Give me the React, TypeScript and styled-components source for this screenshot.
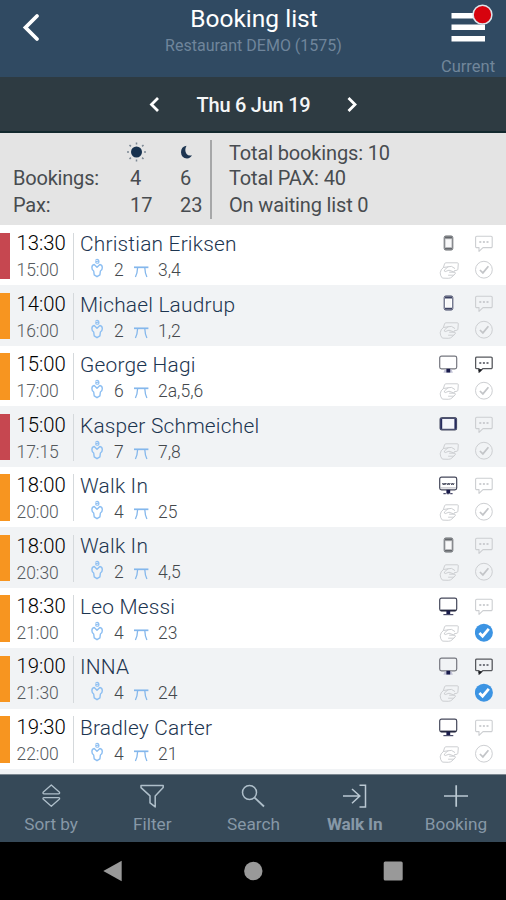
import React from "react";
import styled, { createGlobalStyle } from "styled-components";

const GlobalStyle = createGlobalStyle`
  * { box-sizing: border-box; }
  body { margin: 0; background: #000; font-family: Roboto, "Liberation Sans", sans-serif; }
`;

const Screen = styled.div`
  width: 506px;
  height: 900px;
  display: flex;
  flex-direction: column;
  overflow: hidden;
  background: #f5f8f9;
`;

const Header = styled.header`
  height: 77px;
  flex: none;
  display: grid;
  grid-template-columns: 76px 1fr 76px;
  background: #304a62;
`;

const BackButton = styled.div`
  padding: 13px 0 0 21px;
  svg { display: block; }
`;

const Titles = styled.div`
  text-align: center;
  white-space: nowrap;
`;

const Title = styled.h1`
  margin: 4px 0 0 2px;
  font-size: 24.5px;
  line-height: 29px;
  font-weight: 400;
  color: #fff;
  letter-spacing: 0;
`;

const Subtitle = styled.div`
  margin: 3px 0 0 1px;
  font-size: 16px;
  line-height: 19px;
  color: #6f859b;
  letter-spacing: 0;
`;

const MenuButton = styled.div`
  display: flex;
  flex-direction: column;
  align-items: center;
  svg { display: block; margin-top: 2px; }
`;

const MenuLabel = styled.span`
  margin-top: 7px;
  font-size: 16.5px;
  line-height: 20px;
  letter-spacing: 0;
  color: #71869a;
`;

const DateBar = styled.div`
  height: 56px;
  flex: none;
  display: flex;
  justify-content: center;
  align-items: center;
  gap: 34px;
  padding-top: 1px;
  background: #2e3b42;
  border-bottom: 2px solid #12292e;
  svg { display: block; }
`;

const DateText = styled.span`
  width: 116px;
  padding: 1px 0 0 1px;
  text-align: center;
  white-space: nowrap;
  font-size: 20px;
  font-weight: 500;
  letter-spacing: -0.25px;
  color: #f5f6f7;
`;

const Summary = styled.section`
  height: 92px;
  flex: none;
  display: flex;
  padding: 7px 0 0 13px;
  background: #e4e4e4;
  color: #484c50;
  font-size: 20px;
  line-height: 27px;
`;

const Counts = styled.div`
  width: 199px;
  height: 79px;
  display: grid;
  grid-template-columns: 117px 50px 1fr;
  grid-template-rows: 25px 27px 26px;
  border-right: 2px solid #a6a7a8;
  white-space: nowrap;
  svg { display: block; }
`;

const Label = styled.span`
  letter-spacing: -0.2px;
`;

const SunCell = styled.div`
  margin: 1px 0 0 -4px;
`;

const MoonCell = styled.div`
  margin: 5px 0 0 0;
`;

const Totals = styled.div`
  padding-left: 17px;
  display: grid;
  grid-template-rows: 25px 27px 26px;
  height: 79px;
  align-content: start;
  letter-spacing: -0.15px;
`;

const List = styled.main`
  flex: none;
  height: 550px;
  background: #f1f3f5;
  border-bottom: 1px solid #7c8790;
`;

const Row = styled.article<{ $alt: boolean }>`
  height: 60.45px;
  display: flex;
  align-items: flex-start;
  padding-top: 0.5px;
  background: ${(p) => (p.$alt ? "#f1f3f5" : "#ffffff")};
`;

const Status = styled.div<{ $color: string }>`
  width: 10px;
  height: 46.5px;
  margin-top: 7px;
  background: ${(p) => p.$color};
`;

const Times = styled.div`
  width: 64px;
  height: 47px;
  margin-top: 7px;
  padding-left: 6.5px;
  border-right: 1px solid #d5d9dc;
`;

const StartTime = styled.div`
  margin-top: -2.2px;
  font-size: 20.3px;
  font-weight: 300;
  line-height: 27px;
  color: #000;
`;

const EndTime = styled.div`
  font-size: 17.5px;
  font-weight: 300;
  line-height: 27px;
  color: #55595d;
  letter-spacing: -0.05px;
`;

const Details = styled.div`
  flex: 1;
  padding: 5.8px 0 0 6px;
  white-space: nowrap;
`;

const Guest = styled.div`
  font-size: 20.9px;
  font-weight: 300;
  line-height: 26px;
  letter-spacing: 0.2px;
  color: #1c3550;
`;

const Meta = styled.div`
  height: 26px;
  padding-left: 11px;
  display: grid;
  grid-template-columns: 23px 20px 24px auto;
  font-size: 17.5px;
  font-weight: 300;
  line-height: 27px;
  color: #44484c;
  svg { display: block; }
`;

const Actions = styled.div`
  width: 67px;
  display: grid;
  grid-template-columns: 35.5px 22px;
  grid-template-rows: 26px 26px;
  padding-top: 7.5px;
  svg { display: block; }
`;

const Toolbar = styled.nav`
  height: 67px;
  flex: none;
  display: grid;
  grid-template-columns: repeat(5, 1fr);
  background: #364958;
`;

const Tool = styled.div<{ $strong?: boolean }>`
  display: flex;
  flex-direction: column;
  align-items: center;
  padding: 7px 0 0 1px;
  font-size: 17.2px;
  line-height: 22px;
  font-weight: ${(p) => (p.$strong ? 700 : 400)};
  letter-spacing: ${(p) => (p.$strong ? "-0.15px" : "0")};
  color: #8798a7;
  svg { display: block; margin-bottom: 5px; }
`;

const SystemBar = styled.div`
  flex: 1;
  display: flex;
  justify-content: center;
  padding-top: 18px;
  gap: 120px;
  background: #000;
  svg { display: block; }
`;

type Device = "phone" | "desktop" | "desktopLight" | "tablet" | "web";

interface Booking {
  start: string;
  end: string;
  name: string;
  pax: number;
  tables: string;
  device: Device;
  soft?: boolean;
  note?: boolean;
  confirmed?: boolean;
  color: string;
}

const RED = "#c64750";
const ORANGE = "#f79520";

const bookings: Booking[] = [
  { start: "13:30", end: "15:00", name: "Christian Eriksen", pax: 2, tables: "3,4", device: "phone", soft: true, color: RED },
  { start: "14:00", end: "16:00", name: "Michael Laudrup", pax: 2, tables: "1,2", device: "phone", color: ORANGE },
  { start: "15:00", end: "17:00", name: "George Hagi", pax: 6, tables: "2a,5,6", device: "desktopLight", note: true, color: ORANGE },
  { start: "15:00", end: "17:15", name: "Kasper Schmeichel", pax: 7, tables: "7,8", device: "tablet", color: RED },
  { start: "18:00", end: "20:00", name: "Walk In", pax: 4, tables: "25", device: "web", color: ORANGE },
  { start: "18:00", end: "20:30", name: "Walk In", pax: 2, tables: "4,5", device: "phone", soft: true, color: ORANGE },
  { start: "18:30", end: "21:00", name: "Leo Messi", pax: 4, tables: "23", device: "desktop", confirmed: true, color: ORANGE },
  { start: "19:00", end: "21:30", name: "INNA", pax: 4, tables: "24", device: "desktopLight", note: true, confirmed: true, color: ORANGE },
  { start: "19:30", end: "22:00", name: "Bradley Carter", pax: 4, tables: "21", device: "desktop", color: ORANGE },
];

function DeviceIcon({ kind, soft }: { kind: Device; soft?: boolean }) {
  if (kind === "phone") {
    const c = soft ? "#65686d" : "#3d4262";
    return (
      <svg width="20" height="22" viewBox="0 0 20 22" fill="none">
        <rect x="5.2" y="3" width="8.6" height="14" rx="1.6" fill={soft ? "#d4d5d7" : "#fff"} stroke={c} strokeWidth="1" />
        <path d="M6 4.500h7M6 15.700h7" stroke={c} strokeWidth="1.800" />
        <rect x="7" y="6.400" width="5" height="7.600" fill="#f8f8f9" />
      </svg>
    );
  }
  if (kind === "tablet") {
    return (
      <svg width="20" height="22" viewBox="0 0 20 22" fill="none">
        <rect x="1" y="3.600" width="16.6" height="12.4" rx="1.6" fill="#f4f5fb" stroke="#45495f" strokeWidth="1" />
        <path d="M2.200 4.400v11M16.400 4.400v11" stroke="#252a5e" strokeWidth="2" />
        <path d="M1.500 4.400h16M1.500 15.400h16" stroke="#4b5070" strokeWidth="1.3" />
      </svg>
    );
  }
  const light = kind === "desktopLight";
  return (
    <svg width="20" height="22" viewBox="0 0 20 22" fill="none">
      <rect x="0.7" y="2.2" width="17" height="12.600" rx="1.8" stroke={light ? "#75777f" : "#44475a"} strokeWidth="1.2" />
      {kind === "desktop" && <path d="M1.500 14.400h15.400" stroke="#25283f" strokeWidth="1.600" />}
      {kind === "web" && (
        <>
          <path d="M3.500 8l.8 2 .8-2 .8 2 .8-2M7.700 8l.8 2 .8-2 .8 2 .8-2M11.900 8l.8 2 .8-2 .8 2 .8-2" stroke="#505365" strokeWidth="1" />
          <path d="M1.500 12.900h15.400" stroke="#a3a5ae" strokeWidth="0.8" />
        </>
      )}
      {light && <path d="M4.400 18.700l1.200-3.200h7l1.300 3.200z" fill="#c2c3d6" />}
      <rect x="7.400" y="14.800" width="3.800" height="3.700" fill="#191b4b" />
      {!light && <path d="M4.400 18.600h9.900" stroke="#4b4d6b" strokeWidth="1.200" strokeDasharray={kind === "web" ? "2.4 1" : undefined} />}
    </svg>
  );
}

function NoteIcon({ active }: { active?: boolean }) {
  const c = active ? "#56585d" : "#ccced1";
  return (
    <svg width="20" height="22" viewBox="0 0 20 22" fill="none">
      <path d="M1.800 3.200h14.200a1.200 1.200 0 0 1 1.200 1.200v9a1.200 1.200 0 0 1-1.200 1.200H8L4 18.300v-3.700H1.800A1.200 1.200 0 0 1 .6 13.400V4.400a1.200 1.200 0 0 1 1.200-1.200z" stroke={c} strokeWidth={active ? 1.3 : 1.1} strokeLinejoin="round" />
      {active && <path d="M3.800 15.700h2.600l-1.800 2.100z" fill="#17191d" stroke="#17191d" strokeWidth="1" />}
      <path d="M4.300 9h2M7.900 9h2M11.500 9h2" stroke={active ? "#74767e" : "#bfc1c5"} strokeWidth={active ? 2.200 : 1.600} />
    </svg>
  );
}

function CardIcon() {
  return (
    <svg width="22" height="22" viewBox="0 0 22 22" fill="none" stroke="#cdcfd2" strokeWidth="1" strokeLinejoin="round" strokeLinecap="round">
      <path d="M4.400 8.500L5.600 4.700Q6 3.800 7 3.800H18.300Q19.400 3.800 19.300 4.800L18.900 10.200Q18.800 11 18 11.200L15.400 11.800" />
      <path d="M9 7.800L4.400 8.500Q1.600 10.500 1.200 13.800Q1.200 17 3.400 19.100L9.300 19.300Q11.600 19.300 13 17.900L16.200 14.800Q16.900 13.500 15.600 13.200H10.500" />
      <path d="M15.700 9.400L12.500 7.400L9 7.800L5.600 10.800Q4.700 12.400 6.200 12.600L10 11.200L15.600 13.200M9.500 16.200H14.700" />
    </svg>
  );
}

function CheckIcon({ active }: { active?: boolean }) {
  return (
    <svg width="20" height="22" viewBox="0 0 20 22" fill="none">
      <circle cx="8.900" cy="10.700" r={active ? 9 : 8.400} fill={active ? "#3c94e3" : "none"} stroke={active ? "none" : "#cdcfd2"} strokeWidth="1" />
      <path d={active ? "M4.400 11l3.200 3.200 6.200-7.300" : "M4.900 11l3 2.900 5.500-6.600"} stroke={active ? "#fff" : "#c3c5c8"} strokeWidth={active ? 2.800 : 1.700} />
    </svg>
  );
}

function PersonIcon() {
  return (
    <svg width="14" height="24" viewBox="0 0 14 24" fill="none" stroke="#8dbff2" strokeWidth="1.400" strokeLinejoin="round">
      <path d="M4.200 3.400L6.200 2.200Q8 2.500 8 4.200Q8 6.300 6.200 6.300Q4.900 6.300 4.600 4.800L7.800 3.900" strokeWidth="1.100" />
      <path d="M3.200 7.500L6 10.300L8.900 7.500Q11.300 7.800 11.300 10.700Q11.300 12.900 9.400 14L8.900 17.800L6 19.700L3.200 17.800L2.700 14Q.9 12.900 .9 10.700Q.9 7.800 3.200 7.500z" />
    </svg>
  );
}

function TableIcon() {
  return (
    <svg width="16" height="24" viewBox="0 0 16 24" fill="none" stroke="#84b7ec" strokeWidth="1.300">
      <path d="M0 10.300h14.400" strokeWidth="1.700" />
      <path d="M3.600 10.700Q3.400 16 1.400 20M10.800 10.700Q11 16 12.900 20" />
    </svg>
  );
}

function BookingRow({ booking, alt }: { booking: Booking; alt: boolean }) {
  return (
    <Row $alt={alt}>
      <Status $color={booking.color} />
      <Times>
        <StartTime>{booking.start}</StartTime>
        <EndTime>{booking.end}</EndTime>
      </Times>
      <Details>
        <Guest>{booking.name}</Guest>
        <Meta>
          <PersonIcon />
          <span>{booking.pax}</span>
          <TableIcon />
          <span>{booking.tables}</span>
        </Meta>
      </Details>
      <Actions>
        <DeviceIcon kind={booking.device} soft={booking.soft} />
        <NoteIcon active={booking.note} />
        <CardIcon />
        <CheckIcon active={booking.confirmed} />
      </Actions>
    </Row>
  );
}

export default function App() {
  return (
    <>
      <GlobalStyle />
      <Screen>
        <Header>
          <BackButton>
            <svg width="20" height="30" viewBox="0 0 20 30" fill="none">
              <path d="M16 3L4.500 14.500L16 26" stroke="#fff" strokeWidth="3.800" strokeLinecap="round" />
            </svg>
          </BackButton>
          <Titles>
            <Title>Booking list</Title>
            <Subtitle>Restaurant DEMO (1575)</Subtitle>
          </Titles>
          <MenuButton>
            <svg width="50" height="48" viewBox="0 0 50 48">
              <path d="M8.500 13.800H42M8.500 25.300H42M8.500 36.800H42" stroke="#fff" strokeWidth="5.600" />
              <circle cx="39.500" cy="12.700" r="9.400" fill="#d7030e" stroke="#dfe4ea" strokeWidth="1.500" />
            </svg>
            <MenuLabel>Current</MenuLabel>
          </MenuButton>
        </Header>
        <DateBar>
          <svg width="14" height="20" viewBox="0 0 14 20" fill="none">
            <path d="M11 3L4.500 9.500L11 16" stroke="#fff" strokeWidth="2.800" />
          </svg>
          <DateText>Thu 6 Jun 19</DateText>
          <svg width="14" height="20" viewBox="0 0 14 20" fill="none">
            <path d="M3.500 3L10 9.500L3.500 16" stroke="#fff" strokeWidth="2.800" />
          </svg>
        </DateBar>
        <Summary>
          <Counts>
            <span />
            <SunCell>
              <svg width="22" height="22" viewBox="0 0 22 22">
                <circle cx="10.500" cy="11" r="5.500" fill="#17324f" />
                <path d="M10.500 1.500v2M10.500 18.500v2M1 11h2M18 11h2M3.500 4l1.400 1.400M16.100 16.600l1.400 1.400M3.500 18l1.400-1.400M16.100 5.400L17.500 4" stroke="#7c8894" strokeWidth="1.500" />
              </svg>
            </SunCell>
            <MoonCell>
              <svg width="14" height="15" viewBox="0 0 14 15">
                <path d="M6.500 .8Q1 1.800 1 7.200Q1.300 13.300 7 13.500Q10.500 13.300 12 10.200Q8.500 11 6.600 8.900Q4 5.500 6.500 .8z" fill="#1d3551" />
              </svg>
            </MoonCell>
            <Label>Bookings:</Label>
            <span>4</span>
            <span>6</span>
            <Label>Pax:</Label>
            <span>17</span>
            <span>23</span>
          </Counts>
          <Totals>
            <span>Total bookings: 10</span>
            <span>Total PAX: 40</span>
            <span>On waiting list 0</span>
          </Totals>
        </Summary>
        <List>
          {bookings.map((b, i) => (
            <BookingRow key={i} booking={b} alt={i % 2 === 1} />
          ))}
        </List>
        <Toolbar>
          <Tool>
            <svg width="26" height="26" viewBox="0 0 26 26" fill="none" stroke="#afbfca" strokeWidth="1.300" strokeLinejoin="round">
              <path d="M13.300 3L21.500 10.300Q22 11.800 20.500 11.800H6Q4.600 11.800 5.100 10.300z" />
              <path d="M13.300 24.300L21.500 17.100Q22 15.600 20.500 15.600H6Q4.600 15.600 5.100 17.100z" />
            </svg>
            Sort by
          </Tool>
          <Tool>
            <svg width="26" height="26" viewBox="0 0 26 26" fill="none" stroke="#afbfca" strokeWidth="1.500" strokeLinejoin="round">
              <path d="M2 3.600H24.200V5.600L16.200 13.900V24.900L11 20.900V13.900L2 5.600z" />
            </svg>
            Filter
          </Tool>
          <Tool>
            <svg width="26" height="26" viewBox="0 0 26 26" fill="none" stroke="#afbfca" strokeWidth="1.500">
              <circle cx="9.500" cy="10.500" r="7" />
              <path d="M14.500 15.600L24 24.500" strokeWidth="1.800" />
            </svg>
            Search
          </Tool>
          <Tool $strong>
            <svg width="26" height="26" viewBox="0 0 26 26" fill="none" stroke="#bac8d2" strokeWidth="1.500">
              <path d="M1 14H17.500M10 7L17.800 14L10 21.200M17.500 3.200H23.500V25H17.500" />
            </svg>
            Walk In
          </Tool>
          <Tool>
            <svg width="26" height="26" viewBox="0 0 26 26" fill="none" stroke="#bac8d2" strokeWidth="1.700">
              <path d="M1 14H25M13.200 3.200V24.700" />
            </svg>
            Booking
          </Tool>
        </Toolbar>
        <SystemBar>
          <svg width="20" height="22" viewBox="0 0 20 22"><path d="M.3 11L18.700 .7V21.300z" fill="#999" /></svg>
          <svg width="20" height="22" viewBox="0 0 20 22"><circle cx="10.300" cy="11" r="9.200" fill="#999" /></svg>
          <svg width="20" height="22" viewBox="0 0 20 22"><rect x=".7" y="1.500" width="19" height="19" rx="1.500" fill="#999" /></svg>
        </SystemBar>
      </Screen>
    </>
  );
}
